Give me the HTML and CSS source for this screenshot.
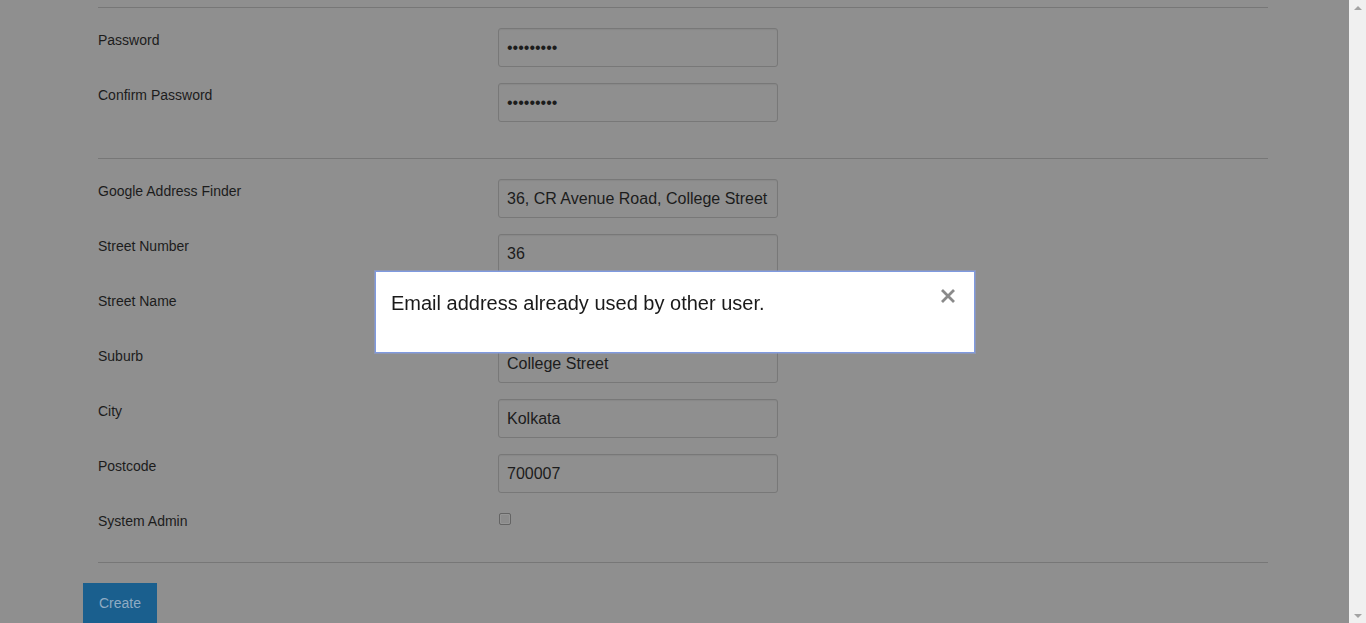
FILE: index.html
```html
<!DOCTYPE html>
<html>
<head>
<meta charset="utf-8">
<link rel="stylesheet" href="styles.css">
</head>
<body>
<div class="viewport">
  <div class="page">
    <hr class="rule">
    <div class="row"><label class="lbl">Password</label><input class="field" type="password" value="123456789"></div>
    <div class="row"><label class="lbl">Confirm Password</label><input class="field" type="password" value="123456789"></div>
    <hr class="rule">
    <div class="row"><label class="lbl">Google Address Finder</label><input class="field" type="text" value="36, CR Avenue Road, College Street"></div>
    <div class="row"><label class="lbl">Street Number</label><input class="field" type="text" value="36"></div>
    <div class="row"><label class="lbl">Street Name</label><input class="field" type="text" value="CR Avenue Road"></div>
    <div class="row"><label class="lbl">Suburb</label><input class="field" type="text" value="College Street"></div>
    <div class="row"><label class="lbl">City</label><input class="field" type="text" value="Kolkata"></div>
    <div class="row"><label class="lbl">Postcode</label><input class="field" type="text" value="700007"></div>
    <div class="row row-check"><label class="lbl">System Admin</label><input class="check" type="checkbox"></div>
    <hr class="rule">
    <button class="btn">Create</button>
  </div>
</div>
<div class="scrollbar">
  <span class="arrow up"></span>
  <span class="arrow down"></span>
</div>
<div class="modal">
  <p class="msg">Email address already used by other user.</p>
  <svg class="close" width="16" height="14" viewBox="0 0 16 14"><path d="M2 1 L14 13 M14 1 L2 13" stroke="#8a8a8a" stroke-width="2.8" stroke-linecap="butt" fill="none"/></svg>
</div>
</body>
</html>
```
FILE: styles.css
```css
html, body {
  margin: 0;
  height: 100%;
}
body {
  display: flex;
  background: #8f8f8f;
  font-family: "Liberation Sans", Arial, sans-serif;
  color: #1c1c1c;
  overflow: hidden;
}
.viewport {
  flex: 1;
  overflow: hidden;
}
.page {
  padding: 7px 81px 0 83px;
}
.rule {
  border: 0;
  border-top: 1px solid #777;
  margin: 0 0 20px 15px;
  height: 0;
}
.row + .rule {
  margin-top: 36px;
}
.row {
  display: flex;
  align-items: flex-start;
  height: 39px;
  margin-bottom: 16px;
  padding-left: 15px;
}
.row-check {
  height: 17px;
}
.lbl {
  width: 400px;
  flex: none;
  font-size: 14px;
  line-height: 20px;
  padding-top: 2px;
}
.field {
  box-sizing: border-box;
  width: 280px;
  height: 39px;
  margin: 0;
  padding: 0 8px;
  border: 1px solid #787878;
  border-radius: 3px;
  background: #8f8f8f;
  box-shadow: inset 0 1px 1px rgba(0,0,0,.05);
  font-family: "Liberation Sans", Arial, sans-serif;
  font-size: 16px;
  color: #1c1c1c;
  outline: none;
}
.check {
  appearance: none;
  -webkit-appearance: none;
  width: 12px;
  height: 12px;
  margin: 4px 0 0 1px;
  border: 1px solid #646464;
  border-radius: 2px;
  background: #8c8c8c;
  box-shadow: inset 0 0 0 1px #959595;
  box-sizing: border-box;
}
.btn {
  display: block;
  border: 0;
  border-radius: 0;
  background: #1a5f8e;
  color: #8fabc3;
  font-family: "Liberation Sans", Arial, sans-serif;
  font-size: 14px;
  line-height: 20px;
  padding: 10px 16px;
  margin: 0;
}
.scrollbar {
  width: 17px;
  flex: none;
  background: #f0f0f0;
  display: flex;
  flex-direction: column;
  justify-content: space-between;
  align-items: center;
  padding: 6px 0 5px;
  box-sizing: border-box;
}
.arrow {
  width: 0;
  height: 0;
  border-left: 4px solid transparent;
  border-right: 4px solid transparent;
}
.arrow.up {
  border-bottom: 4px solid #a3a3a3;
}
.arrow.down {
  border-top: 4px solid #a3a3a3;
}
.modal {
  position: fixed;
  left: 375px;
  top: 271px;
  width: 600px;
  height: 82px;
  box-sizing: border-box;
  background: #fff;
  border: 1px solid #7f9ae0;
  box-shadow: 0 0 0 1px rgba(140, 162, 228, 0.45);
  padding: 17px 15px 0 15px;
}
.msg {
  margin: 0;
  font-size: 20px;
  line-height: 28px;
  color: #1a1a1a;
}
.close {
  position: absolute;
  right: 18px;
  top: 17px;
}
```
